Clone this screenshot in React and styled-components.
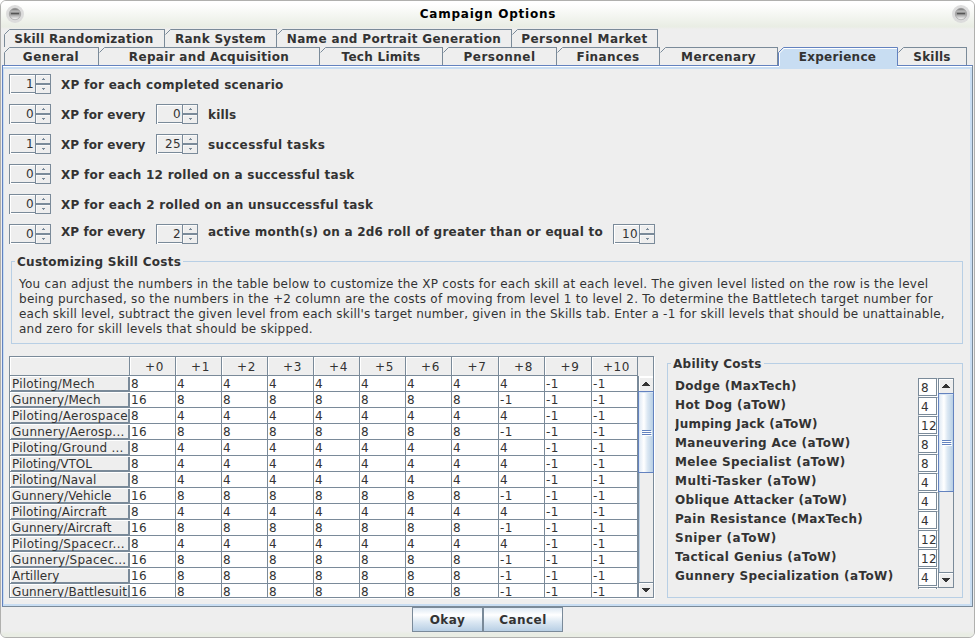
import React from 'react';
import styled, { createGlobalStyle, css } from 'styled-components';

const LINE = '#7a8a99';
const BLUE = '#6382bf';
const PALE = '#c8ddf2';
const SOFT = '#b8cfe5';
const INK = '#333333';

const Global = createGlobalStyle`
  * { box-sizing: border-box; }
  body { margin: 0; background: #fff; overflow: hidden; }
`;

const Window = styled.div`
  width: 975px;
  height: 638px;
  display: flex;
  flex-direction: column;
  border: 1px solid #b0b0ae;
  border-radius: 6px;
  overflow: hidden;
  background: #eeeeee;
  color: ${INK};
  font: 12px/15px 'DejaVu Sans', sans-serif;
  white-space: pre;
`;

const TitleBar = styled.header`
  height: 28px;
  flex: none;
  display: flex;
  align-items: center;
  justify-content: space-between;
  padding: 0 3px 3px 4px;
  background: linear-gradient(#ffffff 10%, #e9ede4 92%, #eeeeee 100%);
`;

const Title = styled.h1`
  margin: 1px 0 0;
  font-size: 12px;
  line-height: 15px;
  color: #000;
  letter-spacing: 0.77px;
`;

const TabRow = styled.nav`
  display: flex;
  flex: none;
  height: 18px;
  padding-left: 3px;
`;

const TabBox = styled.div`
  position: relative;
  width: ${(p) => p.$w}px;
  height: ${(p) => (p.$active ? 22 : 18)}px;
  z-index: ${(p) => (p.$active ? 2 : 0)};
  display: flex;
  align-items: flex-start;
  justify-content: center;
  padding-top: 3px;
  border-right: 1px solid ${(p) => (p.$active ? 'transparent' : LINE)};
  font-weight: bold;
  letter-spacing: ${(p) => p.$ls || 0}px;
`;

const TabShape = styled.svg`
  position: absolute;
  left: 0;
  top: 0;
  z-index: -1;
  overflow: visible;
`;

const Panel = styled.main`
  flex: none;
  height: 542px;
  margin: 0 1px;
  border: 1px solid ${LINE};
  border-top-color: ${BLUE};
  border-left-color: ${BLUE};
  display: flex;
  flex-direction: column;
  box-shadow: inset 0 1px #fff, inset -2px -2px ${PALE}, inset 1px 3px ${PALE};
  padding: 8px 9px 0 6px;
`;

const OptionRow = styled.div`
  display: flex;
  height: 30px;
  flex: none;
`;

const Spin = styled.div`
  width: 42px;
  height: 20px;
  display: flex;
  flex: none;
`;

const SpinField = styled.div`
  width: 26px;
  height: 20px;
  padding: 3px 1px 0 0;
  text-align: right;
  letter-spacing: 0.36px;
  box-shadow: inset 1px 1px ${LINE}, inset 0 -1px #fff, inset 2px 2px #fff, inset 0 -2px ${LINE};
`;

const SpinButtons = styled.div`
  width: 16px;
  display: grid;
  grid-template-rows: 10px 10px;
`;

const SpinButton = styled.div`
  border: 1px solid ${LINE};
  display: grid;
  place-items: center;
  box-shadow: inset 1px 1px #f8f8f8;
`;

const Label = styled.span`
  font-weight: bold;
  flex: none;
  width: ${(p) => (p.$w ? p.$w + 'px' : 'auto')};
  margin: ${(p) => (p.$up ? 1 : 4)}px 10px 0 10px;
  letter-spacing: ${(p) => p.$ls || 0}px;
`;

const Group = styled.section`
  position: relative;
  border: 1px solid ${SOFT};
  flex: none;
  width: ${(p) => p.$w}px;
  height: ${(p) => p.$h}px;
  margin: ${(p) => p.$m};
`;

const Legend = styled.div`
  position: absolute;
  top: -7px;
  left: 3px;
  padding: 0 2px;
  background: #eeeeee;
  font-weight: bold;
  letter-spacing: 0.28px;
`;

const Help = styled.p`
  margin: 15px 0 0 7px;
`;

const HelpLine = styled.span`
  display: block;
  letter-spacing: ${(p) => p.$ls}px;
`;

const Lower = styled.div`
  display: flex;
  margin-top: 12px;
  justify-content: space-between;
`;

const TablePane = styled.div`
  display: grid;
  grid-template: 20px 222px / 629px 16px;
  width: 645px;
  height: 242px;
  border-bottom: 1px solid ${LINE};
  box-shadow: 1px 1px #fff;
  overflow: hidden;
`;

const tracks = '120px 46px 46px 46px 46px 46px 46px 46px 47px 46px 47px 46px';

const HeadRow = styled.div`
  display: grid;
  grid-template-columns: ${tracks};
  border-top: 1px solid ${LINE};
  border-bottom: 1px solid ${LINE};
  border-left: 1px solid ${LINE};
  width: 629px;
`;

const HeadCell = styled.div`
  text-align: center;
  padding: 3px 0 0 4px;
  letter-spacing: 0.6px;
  border-right: 1px solid ${LINE};
  box-shadow: inset 1px 1px #fff;
`;

const HeadCorner = styled.div`
  border-top: 1px solid ${LINE};
  border-right: 1px solid ${LINE};
`;

const Rows = styled.div`
  overflow: hidden;
  border-left: 1px solid ${LINE};
`;

const Row = styled.div`
  display: grid;
  grid-template-columns: ${tracks};
  height: 16px;
`;

const Cell = styled.div`
  height: 16px;
  background: #fff;
  border-right: 1px solid ${LINE};
  border-bottom: 1px solid ${LINE};
  padding: 1px 0 0 1px;
  letter-spacing: 0.36px;
`;

const NameCell = styled.div`
  height: 16px;
  overflow: hidden;
  padding: 1px 0 0 2px;
  border-bottom: 1px solid ${LINE};
  box-shadow: inset 1px 1px #fff, inset -2px -1px ${LINE};
  letter-spacing: ${(p) => p.$ls || 0}px;
`;

const ScrollBar = styled.div`
  display: flex;
  flex-direction: column;
  width: 16px;
  height: ${(p) => p.$h}px;
  border-left: 1px solid ${LINE};
  border-right: 1px solid ${LINE};
  box-shadow: inset 1px 0 ${SOFT};
`;

const Arrow = styled.div`
  height: ${(p) => (p.$down ? 16 : 15)}px;
  flex: none;
  display: grid;
  place-items: center;
  background: #eeeeee;
  border-top: 1px solid ${(p) => (p.$flush ? '#fff' : LINE)};
  ${(p) => p.$down && css`border-bottom: 1px solid ${LINE};`}
  box-shadow: inset 1px 1px #fff;
`;

const Thumb = styled.div`
  height: ${(p) => p.$h}px;
  flex: none;
  margin: 0 -1px;
  border: 1px solid ${BLUE};
  display: flex;
  flex-direction: column;
  align-items: center;
  justify-content: center;
  gap: 1px;
  background: linear-gradient(90deg, #dfe9f4 0, #ffffff 35%, #dce8f3 60%, #b8cfe5 100%);
  box-shadow: inset 1px 1px #d8e5f3;
`;

const Grip = styled.i`
  width: 9px;
  height: 1px;
  background: ${BLUE};
  box-shadow: 1px 1px #fff;
`;

const Track = styled.div`
  flex: 1;
`;

const Abilities = styled.div`
  display: flex;
  margin: 14px 0 0 7px;
  height: 211px;
  overflow: hidden;
`;

const AbilityList = styled.div`
  width: 263px;
`;

const Ability = styled.div`
  display: flex;
  justify-content: space-between;
  height: 19px;
  font-weight: bold;
`;

const AbilityName = styled.span`
  padding-top: 1px;
  letter-spacing: ${(p) => p.$ls || 0}px;
`;

const AbilityField = styled.span`
  width: 20px;
  height: 19px;
  padding: 2px 0 0 2px;
  font-weight: normal;
  letter-spacing: 0.36px;
  background: #fff;
  border: 1px solid ${LINE};
  border-right-color: #fff;
  border-bottom-color: #fff;
  box-shadow: inset -1px -1px ${LINE};
`;

const Footer = styled.footer`
  flex: 1;
  display: flex;
  justify-content: center;
  align-items: flex-start;
  background: linear-gradient(#eeeeee 24px, #e9ede4 27px);
`;

const Button = styled.button`
  height: 25px;
  width: ${(p) => p.$w}px;
  margin: 0;
  padding: 2px 0 0;
  border: 1px solid ${LINE};
  font: bold 12px/15px 'DejaVu Sans', sans-serif;
  letter-spacing: 0.45px;
  color: ${INK};
  background: linear-gradient(#dde8f3 0, #ffffff 30%, #dce8f3 60%, #b8cfe5 100%);
`;

function Orb() {
  return (
    <svg width="20" height="20" viewBox="0 0 20 20">
      <defs>
        <linearGradient id="orb" x2="0" y2="1">
          <stop offset="0" stopColor="#666" />
          <stop offset=".25" stopColor="#bbb" />
          <stop offset=".42" stopColor="#999" />
          <stop offset=".6" stopColor="#aaa" />
          <stop offset="1" stopColor="#fff" />
        </linearGradient>
      </defs>
      <circle cx="10" cy="10" r="9" fill="#dcdcdc" />
      <circle cx="10" cy="10" r="5.7" fill="url(#orb)" stroke="#999" strokeWidth=".6" />
      <rect x="6" y="8.8" width="8" height="1.5" fill="#555" />
    </svg>
  );
}

function Tab({ name, w, active, ls, first }) {
  return (
    <TabBox $w={w} $active={active} $ls={ls}>
      <TabShape width={w} height="22">
        {active ? (
          <>
            <path d={`M1 21V6L6 1H${w - 1}V21Z`} fill={PALE} />
            <path d={`M0.5 19V5.5L5.5 0.5H${w - 0.5}V19`} fill="none" stroke={BLUE} />
            <path d={`M1.5 19V6L6 1.5H${w - 1}`} fill="none" stroke="#fff" />
          </>
        ) : (
          <path d={`${first ? 'M0.5 18V5.5' : 'M0.5 5.5'}L5.5 0.5H${w}`} fill="none" stroke={LINE} />
        )}
      </TabShape>
      {name}
    </TabBox>
  );
}

function SmallTri({ down }) {
  return (
    <svg width="3" height="2" shapeRendering="crispEdges">
      <path d={down ? 'M0 0H3V1H2V2H1V1H0Z' : 'M1 0H2V1H3V2H0V1H1Z'} fill={LINE} />
    </svg>
  );
}

function Tri({ down }) {
  return (
    <svg width="8" height="4" shapeRendering="crispEdges">
      <path d={down ? 'M0 0H8V1H7V2H6V3H5V4H3V3H2V2H1V1H0Z' : 'M3 0H5V1H6V2H7V3H8V4H0V3H1V2H2V1H3Z'} fill={INK} />
    </svg>
  );
}

function Spinner({ value }) {
  return (
    <Spin>
      <SpinField>{value}</SpinField>
      <SpinButtons>
        <SpinButton><SmallTri /></SpinButton>
        <SpinButton><SmallTri down /></SpinButton>
      </SpinButtons>
    </Spin>
  );
}

function Scroll({ h, thumb, flush }) {
  return (
    <ScrollBar $h={h}>
      <Arrow $flush={flush}><Tri /></Arrow>
      <Thumb $h={thumb}><Grip /><Grip /><Grip /></Thumb>
      <Track />
      <Arrow $down><Tri down /></Arrow>
    </ScrollBar>
  );
}

const topTabs = [
  ['Skill Randomization', 161, 0.27], ['Rank System', 112, 0.28],
  ['Name and Portrait Generation', 235, 0.36], ['Personnel Market', 146, 0.45],
];
const tabs = [
  ['General', 95, 0.5], ['Repair and Acquisition', 221, 0.32], ['Tech Limits', 123, 0.28], ['Personnel', 114, 0.5],
  ['Finances', 103, 0.37], ['Mercenary', 118, 0.35], ['Experience', 120, 0.3, true], ['Skills', 69, 0.2],
];
const options = [
  [['1', 'XP for each completed scenario', 0, 0.27]],
  [['0', 'XP for every', 85, 0.07], ['0', 'kills', 0, 0.15]],
  [['1', 'XP for every', 85, 0.07], ['25', 'successful tasks', 0, 0.42]],
  [['0', 'XP for each 12 rolled on a successful task', 0, 0.26]],
  [['0', 'XP for each 2 rolled on an unsuccessful task', 0, 0.28]],
  [['0', 'XP for every', 85, 0.07], ['2', 'active month(s) on a 2d6 roll of greater than or equal to', 395, 0.23], ['10', '']],
];
const help = [
  ['You can adjust the numbers in the table below to customize the XP costs for each skill at each level. The given level listed on the row is the level', 0.257],
  ['being purchased, so the numbers in the +2 column are the costs of moving from level 1 to level 2. To determine the Battletech target number for', 0.26],
  ["each skill level, subtract the given level from each skill's target number, given in the Skills tab. Enter a -1 for skill levels that should be unattainable,", 0.2],
  ['and zero for skill levels that should be skipped.', 0.22],
];
const low = ['8', '4', '4', '4', '4', '4', '4', '4', '4', '-1', '-1'];
const high = ['16', '8', '8', '8', '8', '8', '8', '8', '-1', '-1', '-1'];
const skills = [
  ['Piloting/Mech', low, 0.2], ['Gunnery/Mech', high, 0.1], ['Piloting/Aerospace', low, 0.28],
  ['Gunnery/Aerosp...', high, 0.25], ['Piloting/Ground ...', low, 0.2], ['Piloting/VTOL', low, 0],
  ['Piloting/Naval', low, 0.15], ['Gunnery/Vehicle', high, 0.07], ['Piloting/Aircraft', low, 0.15],
  ['Gunnery/Aircraft', high, 0], ['Piloting/Spacecr...', low, 0.33], ['Gunnery/Spacec...', high, 0.25],
  ['Artillery', high, 0], ['Gunnery/Battlesuit', high, 0.1],
];
const abilities = [
  ['Dodge (MaxTech)', 8, 0.33], ['Hot Dog (aToW)', 4, 0.36], ['Jumping Jack (aToW)', 12, 0.22],
  ['Maneuvering Ace (aToW)', 8, 0.33], ['Melee Specialist (aToW)', 8, 0.39], ['Multi-Tasker (aToW)', 4, 0.5],
  ['Oblique Attacker (aToW)', 4, 0.3], ['Pain Resistance (MaxTech)', 4, 0.32], ['Sniper (aToW)', 12, 0.5],
  ['Tactical Genius (aToW)', 12, 0.41], ['Gunnery Specialization (aToW)', 4, 0.38], ['', ''],
];

export default function App() {
  return (
    <>
      <Global />
      <Window>
        <TitleBar><Orb /><Title>Campaign Options</Title><Orb /></TitleBar>
        <TabRow>{topTabs.map(([n, w, ls], i) => <Tab key={n} name={n} w={w} ls={ls} first={i === 0} />)}</TabRow>
        <TabRow>{tabs.map(([n, w, ls, a], i) => <Tab key={n} name={n} w={w} active={a} ls={ls} first={i === 0} />)}</TabRow>
        <Panel>
          {options.map((row, i) => (
            <OptionRow key={i}>
              {row.map(([v, text, w, ls], j) => (
                <React.Fragment key={j}>
                  <Spinner value={v} />
                  <Label $w={w} $up={i === 5} $ls={ls}>{text}</Label>
                </React.Fragment>
              ))}
            </OptionRow>
          ))}
          <Group $w={952} $h={83} $m="7px 0 0 2px">
            <Legend>Customizing Skill Costs</Legend>
            <Help>{help.map(([t, ls]) => <HelpLine key={t} $ls={ls}>{t}</HelpLine>)}</Help>
          </Group>
          <Lower>
            <TablePane>
              <HeadRow>
                <HeadCell />
                {Array.from({ length: 11 }, (_, i) => <HeadCell key={i}>+{i}</HeadCell>)}
              </HeadRow>
              <HeadCorner />
              <Rows>
                {skills.map(([name, costs, ls]) => (
                  <Row key={name}>
                    <NameCell $ls={ls}>{name}</NameCell>
                    {costs.map((c, i) => <Cell key={i}>{c}</Cell>)}
                  </Row>
                ))}
              </Rows>
              <Scroll h={222} thumb={82} flush />
            </TablePane>
            <Group $w={296} $h={235} $m="7px 0 0 0">
              <Legend>Ability Costs</Legend>
              <Abilities>
                <AbilityList>
                  {abilities.map(([n, v, ls]) => (
                    <Ability key={n}>
                      <AbilityName $ls={ls}>{n}</AbilityName>
                      <AbilityField>{v}</AbilityField>
                    </Ability>
                  ))}
                </AbilityList>
                <Scroll h={210} thumb={99} />
              </Abilities>
            </Group>
          </Lower>
        </Panel>
        <Footer><Button $w={71}>Okay</Button><Button $w={80}>Cancel</Button></Footer>
      </Window>
    </>
  );
}
